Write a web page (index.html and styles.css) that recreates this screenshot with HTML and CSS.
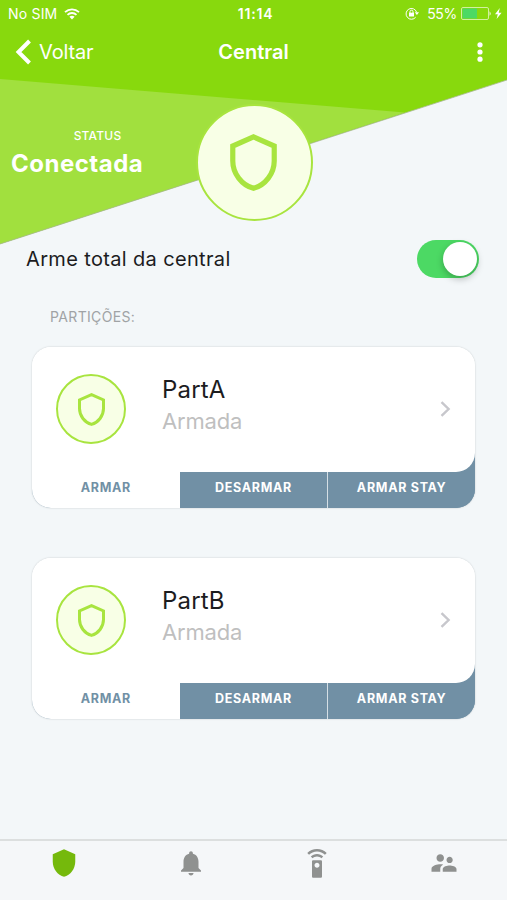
FILE: index.html
```html
<!DOCTYPE html>
<html lang="pt-BR">
<head>
  <meta charset="UTF-8">
  <meta name="viewport" content="width=device-width, initial-scale=1">
  <title>Central</title>
  <link rel="stylesheet" href="styles.css">
</head>
<body>

  <svg width="0" height="0" class="symbols">
    <symbol id="escudo" viewBox="0 0 18 22">
      <path d="M9 1.1L17 4.65V10.4C17 15.2 13.6 19.7 9 20.95C4.4 19.7 1 15.2 1 10.4V4.65Z" fill="none" stroke="currentColor" stroke-width="2"/>
    </symbol>
    <symbol id="seta" viewBox="0 0 11 16">
      <path d="M1.5 1.2L8.6 8L1.5 14.8" fill="none" stroke="currentColor" stroke-width="2.4"/>
    </symbol>
  </svg>

  <div class="app">
    <header class="header">
      <svg class="header-bg" viewBox="0 0 507 245">
        <path d="M0 0H507V80L0 244Z" fill="#88d90d"/>
        <path d="M0 79L405 112.5L0 244Z" fill="#a1e03e"/>
        <path d="M0 244L507 80" stroke="#a9b994" stroke-width="0.8"/>
      </svg>

      <div class="status-bar">
        <div class="status-left">
          <span class="carrier">No SIM</span>
          <svg width="16" height="12" viewBox="0 0 16 12" fill="none" stroke="#fff" stroke-width="1.8">
            <path d="M1 4.2C5 .3 11 .3 15 4.2"/>
            <path d="M3.5 6.8C6 4.4 10 4.4 12.5 6.8"/>
            <path d="M5.4 8.7C6.9 7.4 9.1 7.4 10.6 8.7L8 11.4Z" fill="#fff" stroke="none"/>
          </svg>
        </div>
        <span class="time">11:14</span>
        <div class="status-right">
          <svg width="14" height="13" viewBox="0 0 14 13" fill="none" stroke="#fff">
            <path d="M10.7 10.2A5.4 5.4 0 1 1 11.6 5.2"/>
            <path d="M9.8 5.2H14L11.9 8Z" fill="#fff" stroke="none"/>
            <rect x="4" y="5.7" width="5" height="3.8" fill="#fff" stroke="none"/>
            <path d="M5 6V4.7a1.5 1.5 0 0 1 3 0V6"/>
          </svg>
          <span class="percent">55%</span>
          <svg width="41" height="13" viewBox="0 0 41 13">
            <rect x=".5" y=".5" width="27" height="12" rx="1.5" fill="none" stroke="#d3f09f"/>
            <rect x="1.5" y="1.5" width="14.5" height="10" fill="#4cd964"/>
            <path d="M28.5 4.2q2.6 2.3 0 4.6z" fill="#e7f7cb"/>
            <path d="M38.8 1L34 7.2h2.8L35.6 12L40.6 5.7h-2.9Z" fill="#fff"/>
          </svg>
        </div>
      </div>

      <nav class="nav">
        <a class="back">
          <svg width="17" height="26" viewBox="0 0 17 26">
            <path d="M14.5 2L3.5 13L14.5 24" fill="none" stroke="#fff" stroke-width="4"/>
          </svg>
          <span>Voltar</span>
        </a>
        <h1 class="title">Central</h1>
        <div class="more">
          <svg width="6" height="20" viewBox="0 0 6 20" fill="#fff">
            <circle cx="3" cy="2.8" r="2.6"/>
            <circle cx="3" cy="10" r="2.6"/>
            <circle cx="3" cy="17.2" r="2.6"/>
          </svg>
        </div>
      </nav>

      <div class="summary">
        <div class="state">
          <span class="state-label">STATUS</span>
          <strong class="state-value">Conectada</strong>
        </div>
        <div class="badge badge-large">
          <svg class="shield"><use href="#escudo"/></svg>
        </div>
      </div>
    </header>

    <main class="content">
      <div class="arm-row">
        <span class="arm-text">Arme total da central</span>
        <div class="toggle"><div class="knob"></div></div>
      </div>

      <h2 class="section">PARTIÇÕES:</h2>

      <div class="card">
        <div class="card-body">
          <div class="badge">
            <svg class="shield"><use href="#escudo"/></svg>
          </div>
          <div class="info">
            <span class="name">PartA</span>
            <span class="desc">Armada</span>
          </div>
          <svg class="arrow"><use href="#seta"/></svg>
        </div>
        <div class="actions">
          <button class="action active">ARMAR</button>
          <button class="action">DESARMAR</button>
          <button class="action">ARMAR STAY</button>
        </div>
      </div>

      <div class="card">
        <div class="card-body">
          <div class="badge">
            <svg class="shield"><use href="#escudo"/></svg>
          </div>
          <div class="info">
            <span class="name">PartB</span>
            <span class="desc">Armada</span>
          </div>
          <svg class="arrow"><use href="#seta"/></svg>
        </div>
        <div class="actions">
          <button class="action active">ARMAR</button>
          <button class="action">DESARMAR</button>
          <button class="action">ARMAR STAY</button>
        </div>
      </div>
    </main>

    <footer class="tabs">
      <a class="tab selected">
        <svg viewBox="0 0 24 24"><path d="M12 1L3 5v6c0 5.55 3.84 10.74 9 12 5.16-1.26 9-6.45 9-12V5l-9-4z"/></svg>
      </a>
      <a class="tab">
        <svg viewBox="0 0 24 24"><path d="M12 22c1.1 0 2-.9 2-2h-4c0 1.1.89 2 2 2zm6-6v-5c0-3.07-1.64-5.64-4.5-6.32V4c0-.83-.67-1.5-1.5-1.5s-1.5.67-1.5 1.5v.68C7.63 5.36 6 7.92 6 11v5l-2 2v1h16v-1l-2-2z"/></svg>
      </a>
      <a class="tab">
        <svg viewBox="0 -.8 24 24"><path d="M15 9H9c-.55 0-1 .45-1 1v12c0 .55.45 1 1 1h6c.55 0 1-.45 1-1V10c0-.55-.45-1-1-1zm-3 6c-1.1 0-2-.9-2-2s.9-2 2-2 2 .9 2 2-.9 2-2 2zM7.05 6.05l1.41 1.41C9.37 6.56 10.62 6 12 6s2.63.56 3.54 1.46l1.41-1.41C15.68 4.78 13.93 4 12 4s-3.68.78-4.95 2.05zM12 0C8.96 0 6.21 1.23 4.22 3.22l1.41 1.41C7.26 3.01 9.51 2 12 2s4.74 1.01 6.36 2.64l1.41-1.41C17.79 1.23 15.04 0 12 0z"/></svg>
      </a>
      <a class="tab">
        <svg viewBox="0 0 24 24"><path d="M16.5 12c1.38 0 2.49-1.12 2.49-2.5S17.88 7 16.5 7C15.12 7 14 8.12 14 9.5s1.12 2.5 2.5 2.5zM9 11c1.66 0 2.99-1.34 2.99-3S10.66 5 9 5C7.34 5 6 6.34 6 8s1.34 3 3 3zm7.5 3c-1.83 0-5.5.92-5.5 2.75V19h11v-2.25c0-1.83-3.67-2.75-5.5-2.75zM9 13c-2.33 0-7 1.17-7 3.5V19h7v-2.25c0-.85.33-2.34 2.37-3.47C10.5 13.1 9.66 13 9 13z"/></svg>
      </a>
    </footer>
  </div>

</body>
</html>
```

FILE: styles.css
```css
* {
  box-sizing: border-box;
}

body {
  margin: 0;
  font-family: Inter, "Liberation Sans", sans-serif;
  background-color: #f3f7f9;
  color: #1c1c1e;
}

.symbols {
  position: absolute;
}

.app {
  display: flex;
  flex-direction: column;
  height: 900px;
}

/* Header */
.header {
  position: relative;
  height: 228px;
  color: #fff;
}

.header-bg {
  position: absolute;
  top: 0;
  left: 0;
  width: 507px;
  height: 245px;
  z-index: -1;
}

.status-bar {
  display: grid;
  grid-template-columns: 1fr auto 1fr;
  align-items: center;
  height: 27px;
  padding: 0 5px 0 8px;
  font-size: 14px;
}

.status-left,
.status-right {
  display: flex;
  align-items: center;
}

.status-left {
  gap: 7px;
}

.carrier {
  letter-spacing: 0.2px;
}

.time {
  margin-left: 1px;
  font-weight: 600;
  letter-spacing: 0.8px;
}

.status-right {
  justify-content: flex-end;
}

.percent {
  margin: 0 4px 0 8px;
  letter-spacing: -0.3px;
}

.nav {
  display: grid;
  grid-template-columns: 1fr auto 1fr;
  align-items: center;
  height: 50px;
  padding: 0 24px 0 15px;
}

.back {
  display: flex;
  align-items: center;
  gap: 7px;
  font-size: 20px;
  letter-spacing: -0.15px;
}

.title {
  margin: 0 0 0 9px;
  font-size: 20px;
  font-weight: 600;
  letter-spacing: 0;
}

.more {
  display: flex;
  justify-content: flex-end;
}

.summary {
  display: flex;
  padding: 27px 0 0 11px;
}

.state {
  display: flex;
  flex-direction: column;
  align-items: center;
  width: 185px;
  padding: 24px 12px 0 0;
}

.state-label {
  font-size: 12px;
  line-height: 15px;
  font-weight: 500;
  letter-spacing: 0.2px;
}

.state-value {
  align-self: flex-start;
  margin-top: 6px;
  font-size: 24px;
  line-height: 29px;
  font-weight: 700;
  letter-spacing: 0.5px;
}

.badge {
  display: flex;
  align-items: center;
  justify-content: center;
  width: 70px;
  height: 70px;
  border: 2px solid #a8e43f;
  border-radius: 50%;
  background-color: #f8ffe6;
  color: #a8e43f;
}

.badge .shield {
  width: 27px;
  height: 33px;
}

.badge-large {
  width: 117px;
  height: 117px;
}

.badge-large .shield {
  width: 47px;
  height: 57px;
  margin: 0 3px 1px 0;
}

/* Content */
.content {
  flex: 1;
}

.arm-row {
  display: flex;
  align-items: center;
  justify-content: space-between;
  height: 62px;
  padding: 0 28px 0 26px;
}

.arm-text {
  font-size: 20px;
  letter-spacing: 0.35px;
}

.toggle {
  display: flex;
  justify-content: flex-end;
  width: 62px;
  height: 38px;
  padding: 2px;
  border-radius: 19px;
  background-color: #4cd964;
}

.knob {
  width: 34px;
  height: 34px;
  border-radius: 50%;
  background-color: #fff;
  box-shadow: 0 3px 7px rgba(0,0,0,0.25);
}

.section {
  margin: 18px 0 21px 50px;
  font-size: 14px;
  line-height: 18px;
  font-weight: 400;
  letter-spacing: 0.35px;
  color: #a0a3a5;
}

.card {
  width: 443px;
  height: 161px;
  margin: 0 0 50px 32px;
  border-radius: 19px;
  background: linear-gradient(#fff 50%, #7190a5 50%);
  box-shadow: 0 0 2px rgba(0,0,0,0.2);
  overflow: hidden;
}

.card-body {
  display: flex;
  align-items: center;
  height: 125px;
  padding: 0 24px;
  border-radius: 19px 19px 19px 0;
  background-color: #fff;
}

.card-body .badge {
  margin-bottom: 1px;
}

.info {
  display: flex;
  flex-direction: column;
  flex: 1;
  margin: -9px 0 0 36px;
}

.name {
  font-size: 24px;
  line-height: 32px;
  letter-spacing: 0.2px;
}

.desc {
  font-size: 22px;
  line-height: 30px;
  letter-spacing: -0.2px;
  color: #bfbfbf;
}

.arrow {
  width: 11px;
  height: 16px;
  margin-bottom: 1px;
  color: #c7c7cc;
}

.actions {
  display: grid;
  grid-template-columns: repeat(3, 1fr);
  height: 36px;
}

.action {
  padding: 0 0 5px;
  border: none;
  border-left: 1px solid #d5dfe5;
  background-color: #7190a5;
  color: #fff;
  font-family: inherit;
  font-size: 12.5px;
  font-weight: 700;
  letter-spacing: 0.7px;
}

.action.active {
  border-left: none;
  background-color: #fff;
  color: #7190a5;
}

.action.active + .action {
  border-left: none;
}

/* Bottom tabs */
.tabs {
  display: grid;
  grid-template-columns: repeat(4, 1fr);
  height: 61px;
  padding: 7px 0 0 1px;
  border-top: 2px solid #dcdfdf;
  background-color: #f5f7f9;
}

.tab {
  display: flex;
  justify-content: center;
}

.tab svg {
  width: 30px;
  height: 30px;
  fill: #8f9190;
}

.tab.selected svg {
  fill: #75b90c;
}
```
